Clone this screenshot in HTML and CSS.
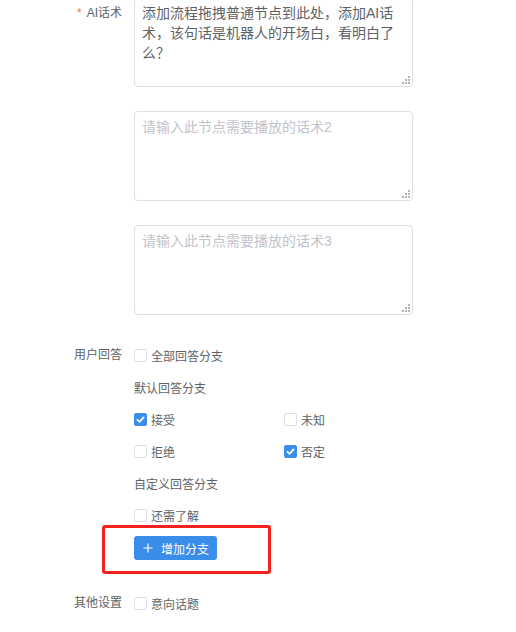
FILE: index.html
```html
<!DOCTYPE html>
<html lang="zh-CN">
<head>
<meta charset="utf-8">
<title>节点设置</title>
<link rel="stylesheet" href="styles.css">
</head>
<body>
<div class="form">
  <div class="item">
    <label class="label"><span class="req">*</span>AI话术</label>
    <div class="content stack">
      <div class="ta-wrap">
        <textarea class="ta">添加流程拖拽普通节点到此处，添加AI话术，该句话是机器人的开场白，看明白了么？</textarea>
        <span class="grip"></span>
      </div>
      <div class="ta-wrap">
        <textarea class="ta" placeholder="请输入此节点需要播放的话术2"></textarea>
        <span class="grip"></span>
      </div>
      <div class="ta-wrap">
        <textarea class="ta" placeholder="请输入此节点需要播放的话术3"></textarea>
        <span class="grip"></span>
      </div>
    </div>
  </div>

  <div class="item">
    <label class="label">用户回答</label>
    <div class="content">
      <div class="row"><span class="cb"></span><span>全部回答分支</span></div>
      <div class="row">默认回答分支</div>
      <div class="grid2">
        <div class="row"><span class="cb on"><svg viewBox="0 0 13 13" width="13" height="13"><path d="M3.4 6.9 L5.5 8.8 L9.6 4.4" fill="none" stroke="#fff" stroke-width="1.7" stroke-linecap="round" stroke-linejoin="round"/></svg></span><span>接受</span></div>
        <div class="row"><span class="cb"></span><span>未知</span></div>
        <div class="row"><span class="cb"></span><span>拒绝</span></div>
        <div class="row"><span class="cb on"><svg viewBox="0 0 13 13" width="13" height="13"><path d="M3.4 6.9 L5.5 8.8 L9.6 4.4" fill="none" stroke="#fff" stroke-width="1.7" stroke-linecap="round" stroke-linejoin="round"/></svg></span><span>否定</span></div>
      </div>
      <div class="row">自定义回答分支</div>
      <div class="row"><span class="cb"></span><span>还需了解</span></div>
      <div class="btn-row">
        <button class="btn" type="button"><svg class="plus" viewBox="0 0 10 10" width="10" height="10"><path d="M5 0.5 V9.5 M0.5 5 H9.5" stroke="#fff" stroke-width="1.2"/></svg><span>增加分支</span></button>
        <div class="annot"></div>
      </div>
    </div>
  </div>

  <div class="item">
    <label class="label">其他设置</label>
    <div class="content">
      <div class="row"><span class="cb"></span><span>意向话题</span></div>
    </div>
  </div>
</div>
</body>
</html>
```
FILE: styles.css
```css
html, body {
  margin: 0;
  padding: 0;
  background: #fff;
}

body {
  font-family: "Liberation Sans", "Noto Sans CJK SC", sans-serif;
  font-size: 12px;
  color: #606266;
  overflow: hidden;
}

.form {
  margin-top: -3px;
}

.item {
  display: flex;
  margin-bottom: 24px;
}

.label {
  width: 134px;
  flex-shrink: 0;
  box-sizing: border-box;
  padding-right: 12px;
  text-align: right;
  line-height: 32px;
  color: #606266;
}

.req {
  color: #f56c6c;
  margin-right: 5px;
}

.content {
  width: 279px;
  display: flex;
  flex-direction: column;
}

.stack {
  gap: 24px;
}

.ta-wrap {
  position: relative;
  height: 90px;
}

.ta {
  display: block;
  width: 100%;
  height: 90px;
  box-sizing: border-box;
  margin: 0;
  border: 1px solid #dcdfe6;
  border-radius: 4px;
  padding: 5px 7px;
  font-family: "Liberation Sans", "Noto Sans CJK SC", sans-serif;
  font-size: 14px;
  line-height: 20px;
  color: #606266;
  resize: none;
  overflow: hidden;
  outline: none;
  background: #fff;
}

.ta::placeholder {
  color: #c0c4cc;
}

.grip {
  position: absolute;
  right: 3px;
  bottom: 3px;
  width: 8px;
  height: 8px;
  background:
    linear-gradient(#b4b4b4, #b4b4b4) 6px 0 / 2px 2px no-repeat,
    linear-gradient(#b4b4b4, #b4b4b4) 3px 3px / 2px 2px no-repeat,
    linear-gradient(#b4b4b4, #b4b4b4) 6px 3px / 2px 2px no-repeat,
    linear-gradient(#b4b4b4, #b4b4b4) 0 6px / 2px 2px no-repeat,
    linear-gradient(#b4b4b4, #b4b4b4) 3px 6px / 2px 2px no-repeat,
    linear-gradient(#b4b4b4, #b4b4b4) 6px 6px / 2px 2px no-repeat;
}

.row {
  height: 32px;
  display: flex;
  align-items: center;
  white-space: nowrap;
}

.cb {
  width: 13px;
  height: 13px;
  box-sizing: border-box;
  border: 1px solid #dcdfe6;
  border-radius: 2px;
  margin-right: 4px;
  background: #fff;
  flex-shrink: 0;
  position: relative;
}

.cb.on {
  background: #3a8ee9;
  border-color: #3a8ee9;
}

.cb svg {
  position: absolute;
  left: -1px;
  top: -1px;
}

.grid2 {
  display: grid;
  grid-template-columns: 150px 150px;
  grid-auto-rows: 32px;
}

.btn-row {
  height: 32px;
  position: relative;
}

.btn {
  margin-top: 5px;
  height: 24px;
  width: 83px;
  box-sizing: border-box;
  padding: 0 0 0 9px;
  border: none;
  border-radius: 3px;
  background: #3a8ee9;
  color: #fff;
  font-family: "Liberation Sans", "Noto Sans CJK SC", sans-serif;
  font-size: 12px;
  display: flex;
  align-items: center;
  cursor: pointer;
}

.plus {
  margin-right: 8px;
}

.annot {
  position: absolute;
  left: -32px;
  top: -6px;
  width: 169px;
  height: 49px;
  box-sizing: border-box;
  border: 3px solid #f5211c;
  border-radius: 3px;
}
```
